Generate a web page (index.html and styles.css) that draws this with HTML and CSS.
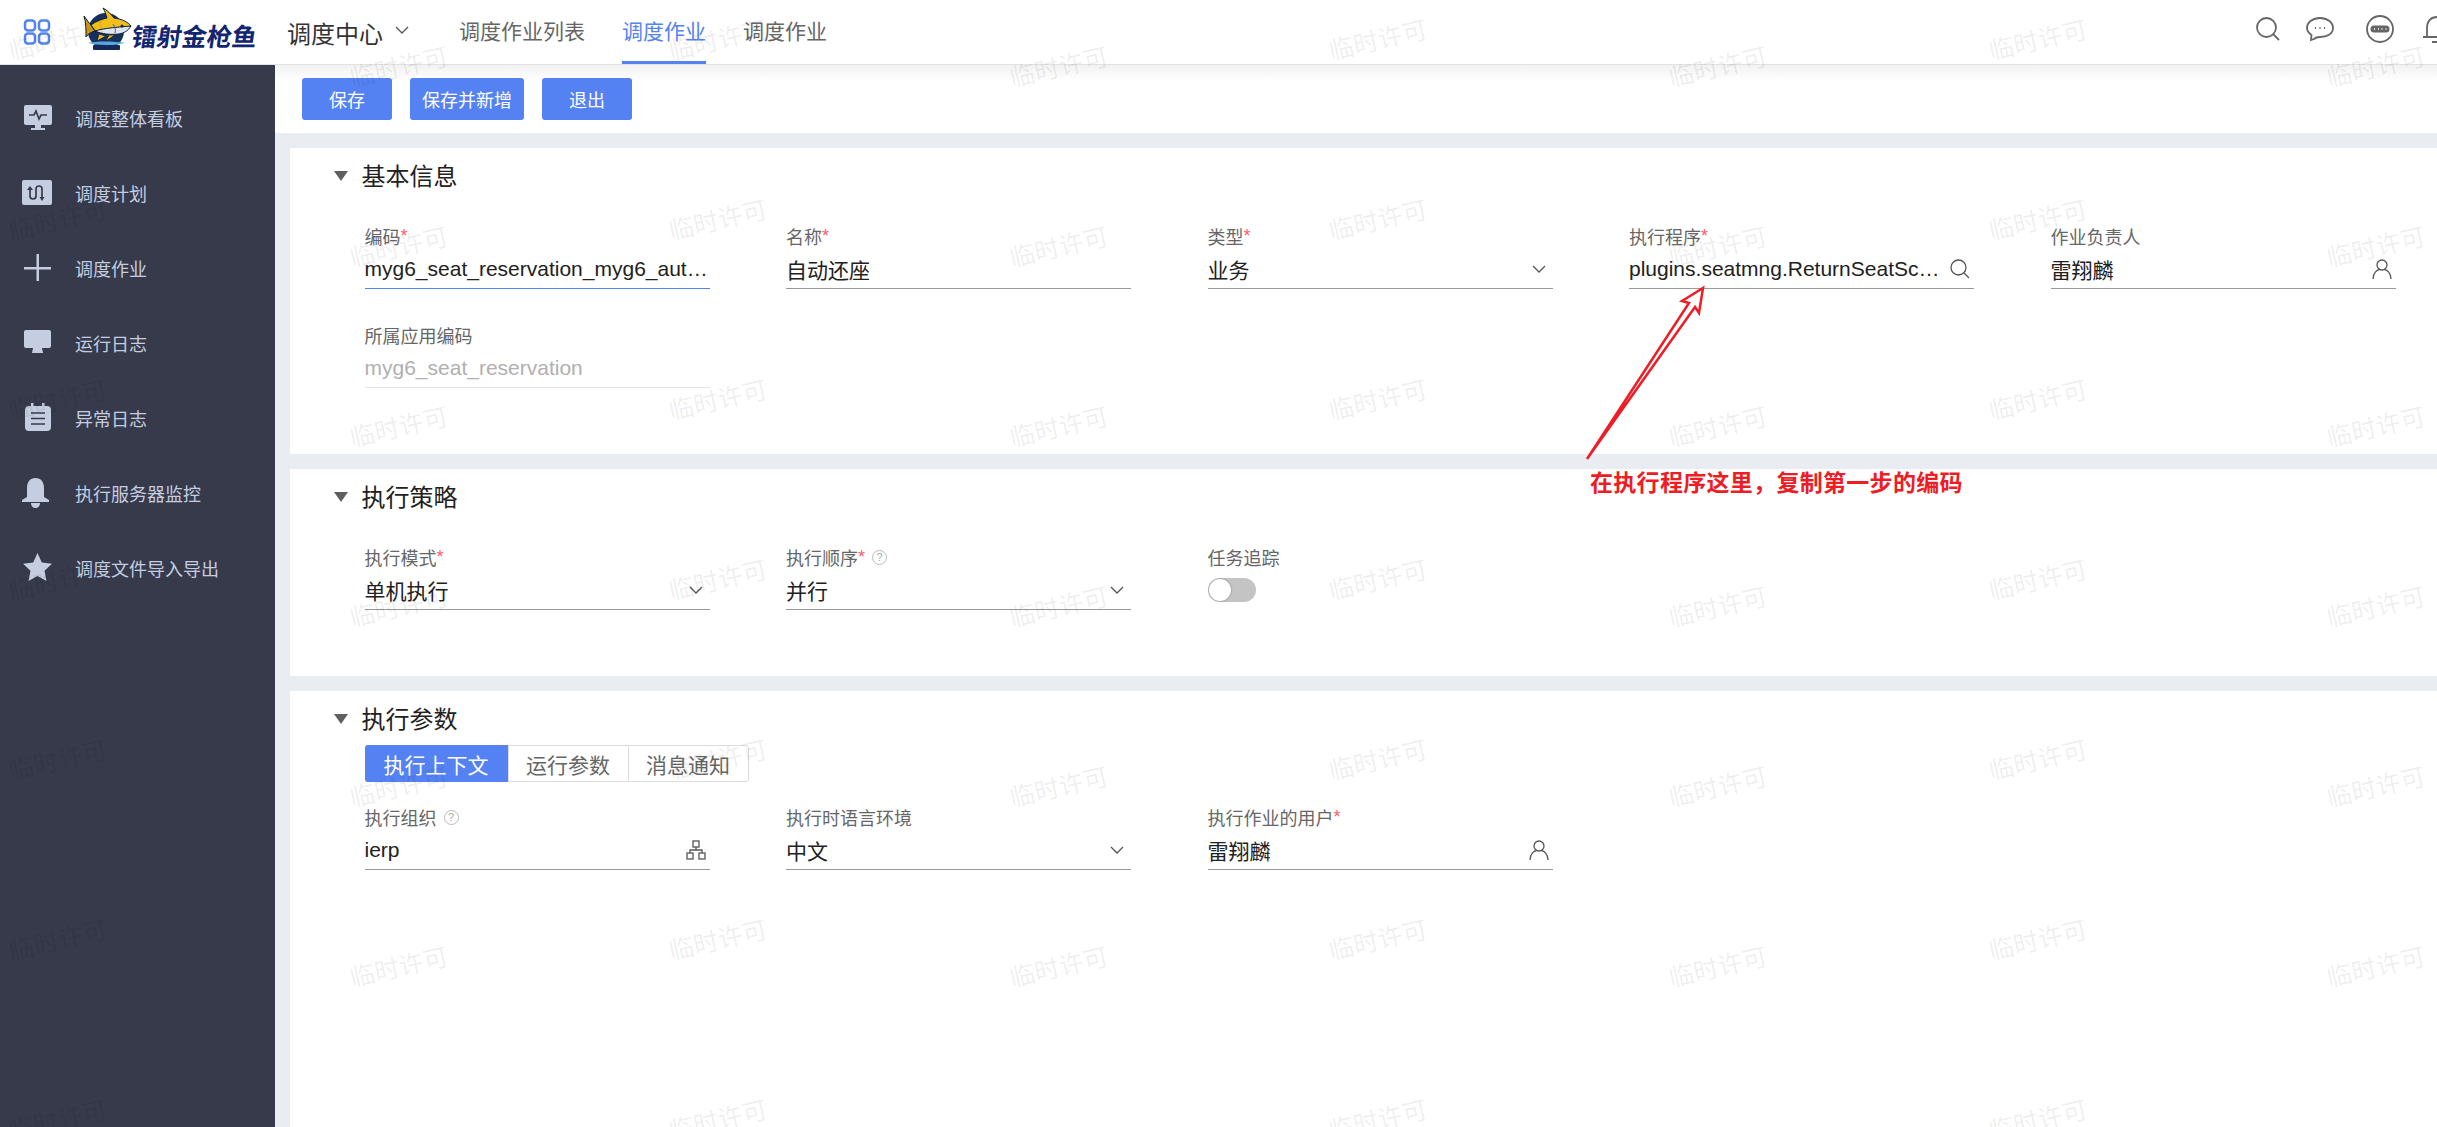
FILE: index.html
```html
<!DOCTYPE html>
<html lang="zh-CN">
<head>
<meta charset="UTF-8">
<meta name="viewport" content="width=device-width, initial-scale=1.0">
<title>调度作业</title>
<link rel="stylesheet" href="styles.css">
</head>
<body>
<header class="topbar">
    <svg class="apps-icon" width="28" height="26" viewBox="0 0 28 26">
        <rect x="2" y="1.5" width="10" height="10" rx="3"/>
        <rect x="16" y="1.5" width="10" height="10" rx="3"/>
        <rect x="2" y="14.5" width="10" height="10" rx="3"/>
        <rect x="16" y="14.5" width="10" height="10" rx="3"/>
    </svg>
    <div class="logo">
        <svg class="logo-fish" width="52" height="46" viewBox="0 0 52 46">
            <circle cx="24" cy="24" r="18" fill="#17305f"/>
            <path d="M2 9 C5 13 7 16 9 18 L13 24 C9 25 6 27 4 30 C4 23 4 15 2 9 Z" fill="#c79a16" stroke="#101d3a" stroke-width="1"/>
            <path d="M21 1 C25 3 29 7 32 11 C40 12 46 15 49 19 L37 22 L13 24 L9 18 C14 14 20 12 25 11 C24 8 23 4 21 1 Z" fill="#f0bf1c" stroke="#101d3a" stroke-width="1"/>
            <path d="M13 24 C22 21 38 20 49 19 C46 24 42 26 37 27 C28 28 20 27 13 24 Z" fill="#dde6ee" stroke="#101d3a" stroke-width="1"/>
            <path d="M31 17 C33 20 34 23 33 26" fill="none" stroke="#4a5d86" stroke-width="1"/>
            <circle cx="40" cy="19" r="1.500" fill="#14224e"/>
            <path d="M17 27 L15 34 L24 29 Z M27 28 L24 34 L33 28 Z" fill="#f0bf1c" stroke="#101d3a" stroke-width=".8"/>
            <path d="M6 36 C14 34 30 34 44 36 C36 37 34 38 30 38 C22 38 14 38 6 36 Z" fill="#58a7dc"/>
            <rect x="11" y="38" width="27" height="5" rx="1" fill="#14285a"/>
        </svg>
        <span class="logo-text">镭射金枪鱼</span>
    </div>
    <div class="app-name">调度中心</div>
    <svg class="chevron app-chevron" width="14" height="8" viewBox="0 0 14 8"><path d="M1 1 L7 7 L13 1"/></svg>
    <nav class="tabs">
        <a class="tab">调度作业列表</a>
        <a class="tab active">调度作业</a>
        <a class="tab">调度作业</a>
    </nav>
    <div class="top-actions">
        <svg width="24" height="24" viewBox="0 0 24 24"><circle cx="10.5" cy="10.5" r="9.500"/><path d="M17 17 L23 23"/></svg>
        <svg class="chat" width="28" height="26" viewBox="0 0 28 26"><path d="M14 2 C21 2 27 6 27 12 C27 18 21 21 14 21 C12 21 10 21 8 23 L5 24 L5.5 19 C2.500 17 1 15 1 12 C1 6 7 2 14 2 Z"/><path class="dots" d="M9 12 H10 M13.500 12 H14.500 M18 12 H19"/></svg>
        <svg width="28" height="28" viewBox="0 0 28 28"><circle cx="14" cy="14" r="13"/><rect class="pill" x="4.500" y="10.500" width="19" height="7" rx="3.500"/><path class="pill-dots" d="M8 14 H9 M12 14 H13 M15.500 14 H16.500 M19.500 14 H20.500"/></svg>
        <svg class="bell" width="30" height="28" viewBox="0 0 30 28"><path d="M1 22 H29 M5 22 V13 C5 6 9 2 15 2 C21 2 25 6 25 13 V22 M10 27 H20"/></svg>
    </div>
</header>

<div class="layout">
    <aside class="sidebar">
        <div class="side-item">
            <svg width="32" height="32" viewBox="0 0 32 32"><rect x="2" y="3" width="28" height="20" rx="2"/><rect x="13" y="23" width="6" height="3"/><rect x="9" y="26" width="14" height="2"/><path class="cut" d="M7 13 H12 L14 9 L17 17 L19 13 H25"/></svg>
            <span>调度整体看板</span>
        </div>
        <div class="side-item">
            <svg width="32" height="32" viewBox="0 0 32 32"><rect x="0" y="3" width="30" height="25" rx="2"/><path class="cut" d="M8 12 V19 a3 3 0 0 0 6 0 V12 a3 3 0 0 1 6 0 V20"/><path class="cut-fill" d="M5 13 L8 9 L11 13 Z M17.500 20 L22.500 20 L20 24 Z"/></svg>
            <span>调度计划</span>
        </div>
        <div class="side-item">
            <svg width="32" height="32" viewBox="0 0 32 32"><rect x="2" y="15" width="27" height="2.500"/><rect x="14.500" y="2" width="2.500" height="27"/></svg>
            <span>调度作业</span>
        </div>
        <div class="side-item">
            <svg width="32" height="32" viewBox="0 0 32 32"><rect x="2" y="3" width="27" height="18" rx="2"/><path d="M11 21 H20 L21 26 H10 Z"/></svg>
            <span>运行日志</span>
        </div>
        <div class="side-item">
            <svg width="32" height="32" viewBox="0 0 32 32"><rect x="3" y="4" width="26" height="25" rx="4"/><rect x="9" y="1" width="2.500" height="5"/><rect x="20" y="1" width="2.500" height="5"/><path class="cut" d="M9 11 H23 M9 16.500 H23 M9 22 H23"/></svg>
            <span>异常日志</span>
        </div>
        <div class="side-item">
            <svg width="32" height="32" viewBox="0 0 32 32"><path d="M13.500 1 C19 1 22 5 22 11 V20 L27 23 V25 H0 V23 L5 20 V11 C5 5 8 1 13.500 1 Z"/><path d="M9 26 H18 C18 29 16 31 13.500 31 C11 31 9 29 9 26 Z"/></svg>
            <span>执行服务器监控</span>
        </div>
        <div class="side-item">
            <svg width="32" height="32" viewBox="0 0 32 32"><path d="M15.500 1 L19.800 10.600 L30 11.800 L22.500 18.800 L24.500 29 L15.500 24 L6.500 29 L8.500 18.800 L1 11.800 L11.200 10.600 Z"/></svg>
            <span>调度文件导入导出</span>
        </div>
    </aside>

    <main class="content">
        <div class="toolbar">
            <button class="btn">保存</button>
            <button class="btn btn-wide">保存并新增</button>
            <button class="btn">退出</button>
        </div>

        <div class="panels">
            <section class="panel panel-basic">
                <h2 class="panel-title"><i class="caret"></i>基本信息</h2>
                <div class="form">
                    <div class="field focused">
                        <label>编码<em>*</em></label>
                        <div class="value"><span>myg6_seat_reservation_myg6_aut…</span></div>
                    </div>
                    <div class="field">
                        <label>名称<em>*</em></label>
                        <div class="value"><span>自动还座</span></div>
                    </div>
                    <div class="field">
                        <label>类型<em>*</em></label>
                        <div class="value"><span>业务</span>
                            <svg class="chevron" width="14" height="8" viewBox="0 0 14 8"><path d="M1 1 L7 7 L13 1"/></svg>
                        </div>
                    </div>
                    <div class="field">
                        <label>执行程序<em>*</em></label>
                        <div class="value"><span>plugins.seatmng.ReturnSeatSc…</span>
                            <svg class="field-icon" width="20" height="20" viewBox="0 0 20 20"><circle cx="8.500" cy="8.500" r="7.500"/><path d="M14 14 L19 19"/></svg>
                        </div>
                    </div>
                    <div class="field">
                        <label>作业负责人</label>
                        <div class="value"><span>雷翔麟</span>
                            <svg class="field-icon" width="20" height="20" viewBox="0 0 20 20"><circle cx="10" cy="6" r="5"/><path d="M1 20 C1 14 5 11 7.500 10.500 M19 20 C19 14 15 11 12.500 10.500"/></svg>
                        </div>
                    </div>
                    <div class="field disabled">
                        <label>所属应用编码</label>
                        <div class="value"><span>myg6_seat_reservation</span></div>
                    </div>
                </div>
            </section>

            <section class="panel panel-strategy">
                <h2 class="panel-title"><i class="caret"></i>执行策略</h2>
                <div class="form">
                    <div class="field">
                        <label>执行模式<em>*</em></label>
                        <div class="value"><span>单机执行</span>
                            <svg class="chevron" width="14" height="8" viewBox="0 0 14 8"><path d="M1 1 L7 7 L13 1"/></svg>
                        </div>
                    </div>
                    <div class="field">
                        <label>执行顺序<em>*</em><i class="help">?</i></label>
                        <div class="value"><span>并行</span>
                            <svg class="chevron" width="14" height="8" viewBox="0 0 14 8"><path d="M1 1 L7 7 L13 1"/></svg>
                        </div>
                    </div>
                    <div class="field plain">
                        <label>任务追踪</label>
                        <div class="value"><div class="switch"><i></i></div></div>
                    </div>
                </div>
            </section>

            <section class="panel panel-params">
                <h2 class="panel-title"><i class="caret"></i>执行参数</h2>
                <div class="segments">
                    <a class="segment active">执行上下文</a>
                    <a class="segment">运行参数</a>
                    <a class="segment">消息通知</a>
                </div>
                <div class="form form-tight">
                    <div class="field">
                        <label>执行组织<i class="help">?</i></label>
                        <div class="value"><span>ierp</span>
                            <svg class="field-icon" width="20" height="20" viewBox="0 0 20 20"><rect x="7" y="1" width="6" height="6"/><rect x="1" y="13" width="6" height="6"/><rect x="13" y="13" width="6" height="6"/><path d="M10 7 V10 M4 13 V10 H16 V13"/></svg>
                        </div>
                    </div>
                    <div class="field">
                        <label>执行时语言环境</label>
                        <div class="value"><span>中文</span>
                            <svg class="chevron" width="14" height="8" viewBox="0 0 14 8"><path d="M1 1 L7 7 L13 1"/></svg>
                        </div>
                    </div>
                    <div class="field">
                        <label>执行作业的用户<em>*</em></label>
                        <div class="value"><span>雷翔麟</span>
                            <svg class="field-icon" width="20" height="20" viewBox="0 0 20 20"><circle cx="10" cy="6" r="5"/><path d="M1 20 C1 14 5 11 7.500 10.500 M19 20 C19 14 15 11 12.500 10.500"/></svg>
                        </div>
                    </div>
                </div>
            </section>
        </div>
    </main>
</div>

<!-- red note drawn over the form -->
<svg class="note-arrow" width="2437" height="1127" viewBox="0 0 2437 1127">
    <polygon points="1703,288 1699,313 1695,307 1587,459 1689,303 1682,301"/>
</svg>
<div class="note-text">在执行程序这里，复制第一步的编码</div>

<div class="watermarks" id="watermarks"></div>

<script>
    // Watermark tiles: columns take turns between two vertical offsets
    const layer = document.getElementById('watermarks');
    const columns = [58, 399, 718, 1059, 1378, 1718, 2038, 2376];

    columns.forEach((x, index) => {
        const firstY = index % 2 === 0 ? 40 : 67;
        for (let y = firstY; y < 1130; y += 180) {
            const mark = document.createElement('span');
            mark.textContent = '临时许可';
            mark.style.left = x + 'px';
            mark.style.top = y + 'px';
            layer.appendChild(mark);
        }
    });
</script>
</body>
</html>
```

FILE: styles.css
```css
* {
    box-sizing: border-box;
}

html, body {
    height: 100%;
}

body {
    display: flex;
    flex-direction: column;
    margin: 0;
    overflow: hidden;
    font-family: "Liberation Sans", "Noto Sans CJK SC", sans-serif;
    color: #212121;
    background-color: #fff;
}

/*------------------------ Top bar ----------------------- */
.topbar {
    display: flex;
    align-items: center;
    flex: none;
    height: 65px;
    padding-left: 23px;
    border-bottom: 1px solid #e2e2e2;
    background-color: #fff;
}

.apps-icon {
    flex: none;
}

.apps-icon rect {
    fill: none;
    stroke: #5582f3;
    stroke-width: 2.5;
}

.logo {
    display: flex;
    align-items: flex-end;
    flex: none;
    width: 178px;
    height: 46px;
    margin-left: 31px;
    margin-bottom: 5px;
}

.logo-fish {
    flex: none;
}

.logo-text {
    margin-left: -2px;
    margin-bottom: 1px;
    font-size: 25px;
    line-height: 30px;
    font-weight: 700;
    color: #12256f;
    white-space: nowrap;
    transform: skewX(-8deg);
}

.app-name {
    margin-left: 27px;
    font-size: 24px;
    color: #333;
}

.chevron {
    flex: none;
    fill: none;
    stroke: #555;
    stroke-width: 1.3;
}

.app-chevron {
    margin-left: 12px;
    margin-bottom: 4px;
}

.tabs {
    display: flex;
    align-self: stretch;
    gap: 37px;
    margin-left: 50px;
}

.tab {
    display: flex;
    align-items: center;
    height: 64px;
    padding-bottom: 2px;
    border-bottom: 3px solid transparent;
    font-size: 21px;
    color: #666;
}

.tab.active {
    color: #5582f3;
    border-bottom-color: #5582f3;
}

.top-actions {
    display: flex;
    align-items: center;
    flex: none;
    gap: 26px;
    margin-left: auto;
    margin-right: -15px;
    padding-bottom: 7px;
}

.top-actions svg {
    flex: none;
    fill: none;
    stroke: #666;
    stroke-width: 1.8;
}

.top-actions .chat {
    margin-right: 6px;
}

.top-actions .bell {
    margin-left: 2px;
}

.top-actions .dots {
    stroke-width: 2;
}

.top-actions .pill {
    fill: #666;
    stroke: none;
}

.top-actions .pill-dots {
    stroke: #ddd;
    stroke-width: 2;
}

/*------------------------ Sidebar ----------------------- */
.layout {
    display: flex;
    flex: 1;
    min-height: 0;
}

.sidebar {
    flex: none;
    width: 275px;
    padding-top: 15px;
    background-color: #363a4b;
}

.side-item {
    display: flex;
    align-items: center;
    gap: 21px;
    height: 75px;
    padding-left: 22px;
    font-size: 18px;
    color: #c5cde0;
}

.side-item svg {
    flex: none;
    fill: #c5cde0;
}

.side-item .cut {
    fill: none;
    stroke: #363a4b;
    stroke-width: 1.700;
}

.side-item .cut-fill {
    fill: #363a4b;
}

/*------------------------ Content ----------------------- */
.content {
    display: flex;
    flex-direction: column;
    flex: 1;
    min-width: 0;
    background-color: #e9edf2;
}

.toolbar {
    display: flex;
    flex: none;
    gap: 18px;
    height: 68px;
    padding: 13px 27px 0;
    background: linear-gradient(#f2f2f2, #fff 16px);
}

.btn {
    width: 90px;
    height: 42px;
    padding: 0;
    border: 0;
    border-radius: 3px;
    font-family: inherit;
    font-size: 18px;
    color: #fff;
    background-color: #5582f3;
}

.btn-wide {
    width: 114px;
}

.panels {
    display: flex;
    flex-direction: column;
    flex: 1;
    gap: 15px;
    padding: 15px 0 0 15px;
    min-height: 0;
}

.panel {
    flex: none;
    padding-left: 74.5px;
    background-color: #fff;
}

.panel-basic {
    height: 306px;
}

.panel-strategy {
    height: 207px;
}

.panel-params {
    flex: 1;
}

.panel-title {
    position: relative;
    display: flex;
    align-items: center;
    height: 54px;
    margin: 0 0 0 -3px;
    padding-bottom: 2px;
    font-size: 24px;
    font-weight: 400;
    color: #212121;
}

.caret {
    position: absolute;
    left: -28px;
    top: 23px;
    width: 0;
    height: 0;
    border-left: 7px solid transparent;
    border-right: 7px solid transparent;
    border-top: 10px solid #5f5f5f;
}

.form {
    display: grid;
    grid-template-columns: repeat(5, 345px);
    column-gap: 76.5px;
    row-gap: 33px;
    margin-top: 21px;
}

.form-tight {
    margin-top: 22px;
}

.field {
    height: 66px;
}

.field label {
    display: flex;
    align-items: center;
    height: 26px;
    font-size: 18px;
    color: #666;
}

.field label em {
    font-style: normal;
    color: #ff5a6e;
}

.value {
    display: flex;
    align-items: center;
    justify-content: space-between;
    height: 40px;
    padding-right: 7px;
    border-bottom: 1px solid #999;
    font-size: 21px;
    white-space: nowrap;
    color: #212121;
}

.field.focused .value {
    padding-right: 0;
    border-bottom-color: #5582f3;
}

.field.disabled .value {
    color: #b0b0b0;
    border-bottom-color: #e4e4e4;
}

.field.plain .value {
    border-bottom: 0;
}

.field-icon {
    flex: none;
    margin-right: -3px;
    fill: none;
    stroke: #555;
    stroke-width: 1.300;
}

.help {
    display: inline-flex;
    align-items: center;
    justify-content: center;
    width: 15px;
    height: 15px;
    margin-left: 7px;
    border: 1px solid #bbb;
    border-radius: 50%;
    font-size: 11px;
    font-style: normal;
    color: #aaa;
}

.switch {
    width: 48px;
    height: 24px;
    padding: 1px;
    border-radius: 12px;
    background-color: #c4c4c4;
}

.switch i {
    display: block;
    width: 22px;
    height: 22px;
    border-radius: 50%;
    background-color: #fff;
    box-shadow: 0 0 2px rgba(0, 0, 0, .4);
}

.segments {
    display: flex;
    width: 384px;
    height: 37px;
    border: 1px solid #ddd;
    border-radius: 3px;
}

.segment {
    display: flex;
    align-items: center;
    justify-content: center;
    width: 120px;
    border-left: 1px solid #ddd;
    font-size: 21px;
    color: #666;
}

.segment:first-child {
    border-left: 0;
}

.segment.active {
    width: 143px;
    margin: -1px 0 -1px -1px;
    border-radius: 3px 0 0 3px;
    color: #fff;
    background-color: #5582f3;
}

/*------------------ Red note and watermark ---------------------- */
.note-arrow {
    position: absolute;
    left: 0;
    top: 0;
    pointer-events: none;
}

.note-arrow polygon {
    fill: #fff;
    stroke: #ee1c25;
    stroke-width: 2.5;
}

.note-text {
    position: absolute;
    left: 1590px;
    top: 468px;
    font-size: 23px;
    line-height: 30px;
    font-weight: 700;
    letter-spacing: .3px;
    color: #ee1c25;
    white-space: nowrap;
}

.watermarks {
    position: absolute;
    left: 0;
    top: 0;
    width: 100%;
    height: 100%;
    overflow: hidden;
    pointer-events: none;
}

.watermarks span {
    position: absolute;
    font-size: 25px;
    line-height: 30px;
    color: rgba(0, 0, 0, .08);
    white-space: nowrap;
    transform: translate(-50%, -50%) rotate(-13deg);
}
```
